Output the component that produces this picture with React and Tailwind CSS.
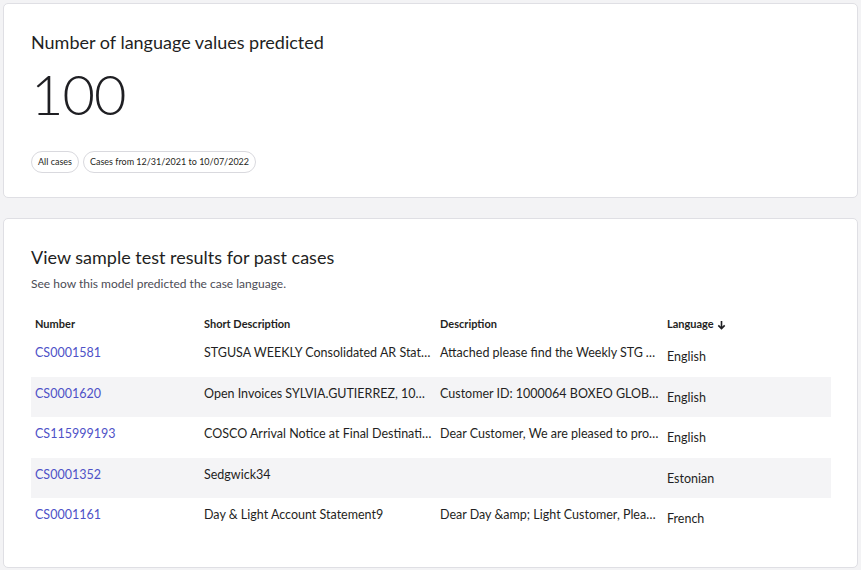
const rows = [
  {
    number: "CS0001581",
    short: "STGUSA WEEKLY Consolidated AR Statement for week ending",
    desc: "Attached please find the Weekly STG AR Statement",
    lang: "English",
  },
  {
    number: "CS0001620",
    short: "Open Invoices SYLVIA.GUTIERREZ, 1000064 BOXEO",
    desc: "Customer ID: 1000064 BOXEO GLOBAL LLC open invoices",
    lang: "English",
  },
  {
    number: "CS115999193",
    short: "COSCO Arrival Notice at Final Destination for shipment",
    desc: "Dear Customer, We are pleased to provide you with",
    lang: "English",
  },
  { number: "CS0001352", short: "Sedgwick34", desc: "", lang: "Estonian" },
  {
    number: "CS0001161",
    short: "Day & Light Account Statement9",
    desc: "Dear Day &amp; Light Customer, Please find attached",
    lang: "French",
  },
];

function Pill({ children }) {
  return (
    <span className="inline-flex h-[22px] items-center rounded-full border border-[#d9d9de] bg-white px-[6px] text-[9px] text-[#1f1f23]">
      {children}
    </span>
  );
}

function SortDown() {
  return (
    <svg width="9" height="10" viewBox="0 0 9 10" className="ml-[3px] inline-block" aria-hidden>
      <path d="M4.5 1v7.5M1.3 5.4 4.5 8.6 7.7 5.4" fill="none" stroke="#1f1f23" strokeWidth="1.6" />
    </svg>
  );
}

export default function App() {
  return (
    <div className="min-h-[570px] bg-[#f3f3f5] p-[3px] font-['Lato','Noto_Sans',sans-serif] text-[#1f1f23]">
      <div className="flex flex-col gap-[20px]">
        <section className="rounded-[5px] border border-[#dfdfe4] bg-white px-[27px] pb-[24px] pt-[26px]">
          <h2 className="text-[18px] leading-[24px]">Number of language values predicted</h2>
          <div className="mt-[10px] text-[56px] font-light leading-[60px] tracking-[-1px]">100</div>
          <div className="mt-[27px] flex gap-[4px]">
            <Pill>All cases</Pill>
            <Pill>Cases from 12/31/2021 to 10/07/2022</Pill>
          </div>
        </section>

        <section className="rounded-[5px] border border-[#dfdfe4] bg-white px-[27px] pb-[28px] pt-[26px]">
          <h2 className="text-[18px] leading-[24px]">View sample test results for past cases</h2>
          <p className="mt-[7px] text-[12px] leading-[16px] text-[#4b4b55]">
            See how this model predicted the case language.
          </p>
          <table className="mt-[24px] w-full table-fixed border-collapse text-left">
            <colgroup>
              <col className="w-[169px]" />
              <col className="w-[236px]" />
              <col className="w-[227px]" />
              <col className="w-[168px]" />
            </colgroup>
            <thead>
              <tr className="h-[20px] text-[11px] font-bold leading-[16px]">
                <th className="px-[4px] pb-[4px] align-top">Number</th>
                <th className="px-[4px] pb-[4px] align-top">Short Description</th>
                <th className="px-[4px] pb-[4px] align-top">Description</th>
                <th className="px-[4px] pb-[4px] align-top">
                  Language
                  <SortDown />
                </th>
              </tr>
            </thead>
            <tbody className="text-[12.5px]">
              {rows.map((r, i) => (
                <tr key={r.number} className={`h-[40.6px] ${i % 2 === 1 ? "bg-[#f4f4f6]" : ""}`}>
                  <td className="truncate px-[4px] pb-[6px] align-middle">
                    <a className="text-[#4e51c7]" href="#">
                      {r.number}
                    </a>
                  </td>
                  <td className="truncate px-[4px] pb-[6px] align-middle">{r.short}</td>
                  <td className="truncate px-[4px] pb-[6px] align-middle">{r.desc}</td>
                  <td className="truncate px-[4px] pt-[2px] align-middle">{r.lang}</td>
                </tr>
              ))}
            </tbody>
          </table>
        </section>
      </div>
    </div>
  );
}
